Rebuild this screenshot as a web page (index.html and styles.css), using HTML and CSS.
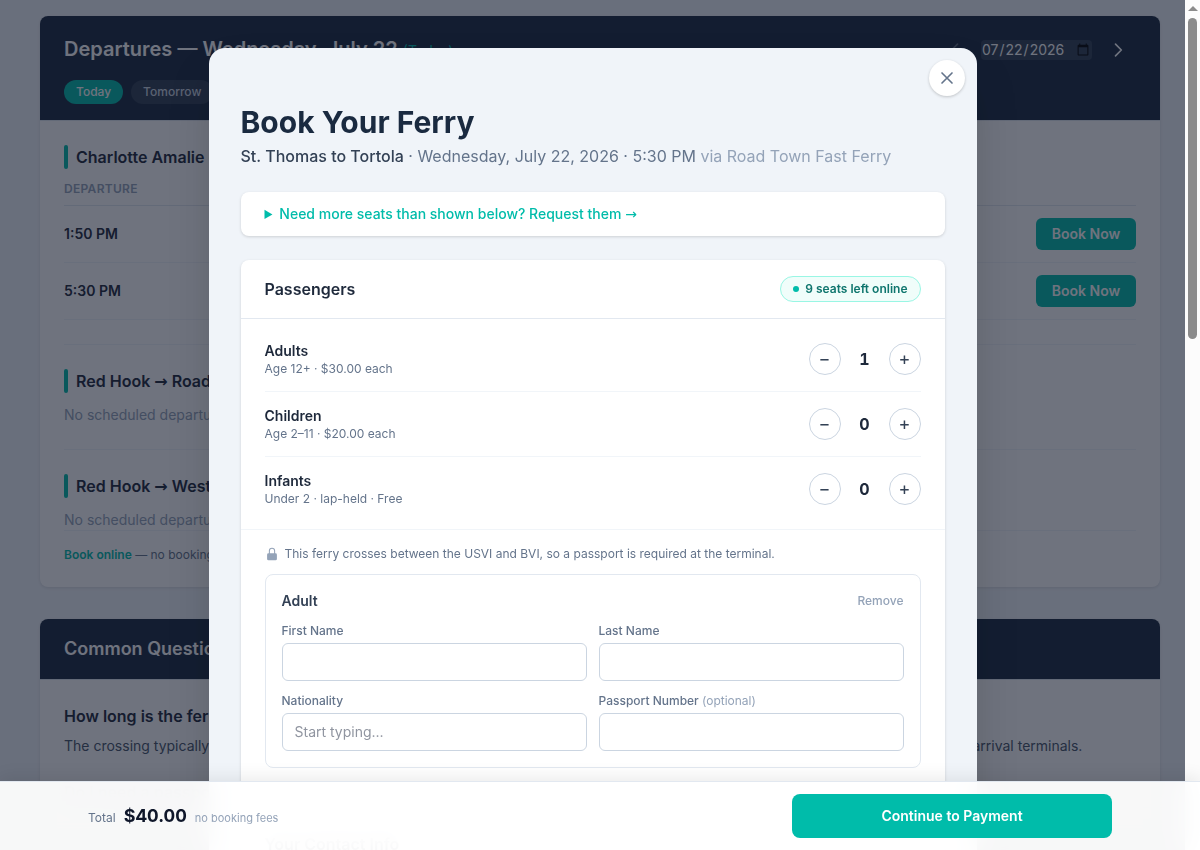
FILE: index.html
```html
<!DOCTYPE html>
<html lang="en">
<head>
  <meta charset="UTF-8">
  <meta name="viewport" content="width=device-width, initial-scale=1.0">
  <title>Book Your Ferry</title>
  <link rel="stylesheet" href="styles.css">
</head>
<body>
  <main class="page">
    <section class="card">
      <div class="card-header">
        <div class="header-row">
          <h2 class="header-title">Departures — Wednesday, July 22 <span class="header-today">(Today)</span></h2>
          <div class="date-nav">
            <button class="nav-btn" aria-label="Previous day" disabled>
              <svg viewBox="0 0 24 24"><path d="M15 19l-7-7 7-7"/></svg>
            </button>
            <input class="date-input" type="date" value="2026-07-22" aria-label="Departure date">
            <button class="nav-btn" aria-label="Next day">
              <svg viewBox="0 0 24 24"><path d="M9 5l7 7-7 7"/></svg>
            </button>
          </div>
        </div>
        <div class="day-pills">
          <button class="pill active">Today</button>
          <button class="pill">Tomorrow</button>
        </div>
      </div>
      <div class="card-body">
        <div class="route">
          <h3 class="route-title">Charlotte Amalie <span class="arrow">→</span> Road Town</h3>
          <table class="departures">
            <thead>
              <tr><th>Departure</th><th></th></tr>
            </thead>
            <tbody>
              <tr><td>1:50 PM</td><td class="action"><button class="book-btn">Book Now</button></td></tr>
              <tr><td>5:30 PM</td><td class="action"><button class="book-btn">Book Now</button></td></tr>
            </tbody>
          </table>
        </div>
        <div class="route">
          <h3 class="route-title">Red Hook <span class="arrow">→</span> Road Town</h3>
          <p class="no-departures">No scheduled departures</p>
        </div>
        <div class="route">
          <h3 class="route-title">Red Hook <span class="arrow">→</span> West End</h3>
          <p class="no-departures">No scheduled departures</p>
        </div>
        <p class="book-note"><strong>Book online</strong> — no booking fees</p>
      </div>
    </section>

    <section class="card">
      <div class="card-header">
        <h2 class="section-title">Common Questions</h2>
      </div>
      <div class="card-body">
        <h3 class="question">How long is the ferry ride?</h3>
        <p class="answer">The crossing typically takes about 45 to 60 minutes, depending on sea conditions, the vessel in service that day, and your departure and arrival terminals.</p>
        <h3 class="question">Do I need a passport?</h3>
      </div>
    </section>
  </main>

  <div class="overlay">
    <div class="overlay-content">
      <div class="modal" role="dialog" aria-labelledby="modal-title">
        <button class="close-btn" aria-label="Close">
          <svg viewBox="0 0 24 24"><path d="M6 18L18 6M6 6l12 12"/></svg>
        </button>
        <h1 class="modal-title" id="modal-title">Book Your Ferry</h1>
        <p class="modal-subtitle"><span class="trip">St. Thomas to Tortola</span> · Wednesday, July 22, 2026 · 5:30 PM <span class="operator">via Road Town Fast Ferry</span></p>

        <details class="panel more-seats">
          <summary>Need more seats than shown below? Request them <span class="arrow">→</span></summary>
        </details>

        <section class="panel">
          <div class="panel-header">
            <h2>Passengers</h2>
            <span class="seats-left">9 seats left online</span>
          </div>
          <div class="counters">
            <div class="counter-row">
              <div>
                <div class="counter-name">Adults</div>
                <div class="counter-info">Age 12+ · $30.00 each</div>
              </div>
              <div class="counter">
                <button aria-label="Remove adult">−</button>
                <span class="count">1</span>
                <button aria-label="Add adult">+</button>
              </div>
            </div>
            <div class="counter-row">
              <div>
                <div class="counter-name">Children</div>
                <div class="counter-info">Age 2–11 · $20.00 each</div>
              </div>
              <div class="counter">
                <button aria-label="Remove child">−</button>
                <span class="count">0</span>
                <button aria-label="Add child">+</button>
              </div>
            </div>
            <div class="counter-row">
              <div>
                <div class="counter-name">Infants</div>
                <div class="counter-info">Under 2 · lap-held · Free</div>
              </div>
              <div class="counter">
                <button aria-label="Remove infant">−</button>
                <span class="count">0</span>
                <button aria-label="Add infant">+</button>
              </div>
            </div>
          </div>
          <div class="travelers">
            <p class="passport-note">
              <svg viewBox="0 0 20 20"><path fill-rule="evenodd" d="M10 1a4.500 4.500 0 00-4.500 4.500V9H5a2 2 0 00-2 2v6a2 2 0 002 2h10a2 2 0 002-2v-6a2 2 0 00-2-2h-.5V5.500A4.500 4.500 0 0010 1zm3 8V5.500a3 3 0 10-6 0V9h6z"/></svg>
              This ferry crosses between the USVI and BVI, so a passport is required at the terminal.
            </p>
            <div class="traveler">
              <div class="traveler-header">
                <h3>Adult</h3>
                <button class="remove-btn">Remove</button>
              </div>
              <div class="fields">
                <div class="field">
                  <label for="first-name">First Name</label>
                  <input type="text" id="first-name">
                </div>
                <div class="field">
                  <label for="last-name">Last Name</label>
                  <input type="text" id="last-name">
                </div>
                <div class="field">
                  <label for="nationality">Nationality</label>
                  <input type="text" id="nationality" placeholder="Start typing...">
                </div>
                <div class="field">
                  <label for="passport">Passport Number <span class="optional">(optional)</span></label>
                  <input type="text" id="passport">
                </div>
              </div>
            </div>
          </div>
        </section>

        <section class="panel">
          <div class="panel-header">
            <h2>Your Contact Info</h2>
          </div>
        </section>
      </div>
    </div>
    <div class="scrollbar" aria-hidden="true">
      <span class="scroll-arrow"></span>
      <span class="scroll-thumb"></span>
    </div>
  </div>

  <div class="pay-bar">
    <div class="pay-inner">
      <div class="total">
        <span class="total-label">Total</span>
        <span class="total-amount">$40.00</span>
        <span class="total-note">no booking fees</span>
      </div>
      <button class="pay-btn">Continue to Payment</button>
    </div>
  </div>
</body>
</html>
```
FILE: styles.css
```css
:root {
  --teal: #00bcaa;
  --navy: #1a2a40;
  --page-bg: #f0f4f9;
  --ink: #1e293b;
  --slate: #334155;
  --muted: #64748b;
  --faint: #94a3b8;
  --line: #e2e8f0;
  --line-soft: #f1f5f9;
  --line-strong: #cbd5e1;
}

* {
  box-sizing: border-box;
  margin: 0;
  padding: 0;
}

body {
  font-family: Inter, 'Liberation Sans', sans-serif;
  font-size: 14px;
  line-height: 20px;
  color: var(--ink);
  background: var(--page-bg);
  height: 100vh;
  overflow: hidden;
}

button,
input {
  font: inherit;
}

button {
  border: none;
  background: none;
  cursor: pointer;
}

.arrow {
  font-family: 'Open Sans', 'DejaVu Sans', sans-serif;
}

.page {
  display: flex;
  flex-direction: column;
  gap: 32px;
  padding: 16px 40px;
}

/* Schedule and FAQ cards */

.card {
  background: #fff;
  border-radius: 8px;
  box-shadow: 0 1px 3px rgba(0, 0, 0, 0.1);
  overflow: hidden;
}

.card-header {
  background: var(--navy);
  color: #fff;
  padding: 16px 24px;
  border-bottom: 1px solid var(--line);
  background-clip: padding-box;
}

.header-row {
  display: flex;
  justify-content: space-between;
  align-items: center;
  margin-bottom: 12px;
}

.header-title {
  font-size: 20px;
  line-height: 32px;
  font-weight: 600;
}

.header-today {
  font-size: 14px;
  font-weight: 400;
  color: var(--teal);
}

.date-nav {
  display: flex;
  align-items: center;
  gap: 8px;
}

.nav-btn {
  display: flex;
  padding: 8px;
  color: #fff;
}

.nav-btn:disabled {
  opacity: 0.3;
}

.nav-btn svg {
  width: 20px;
  height: 20px;
  fill: none;
  stroke: currentColor;
  stroke-width: 2;
  stroke-linecap: round;
  stroke-linejoin: round;
}

.date-input {
  height: 20px;
  border: none;
  border-radius: 4px;
  background: rgba(255, 255, 255, 0.1);
  color: #fff;
}

.date-input::-webkit-calendar-picker-indicator {
  margin-left: -15px;
}

.day-pills {
  display: flex;
  gap: 8px;
}

.pill {
  padding: 4px 12px;
  border-radius: 12px;
  font-size: 12px;
  line-height: 16px;
  font-weight: 500;
  color: var(--line-strong);
  background: rgba(255, 255, 255, 0.1);
}

.pill.active {
  color: #fff;
  background: var(--teal);
}

.section-title {
  font-size: 18px;
  line-height: 28px;
  font-weight: 600;
}

.card-body {
  padding: 24px;
}

.route {
  padding-bottom: 24px;
  margin-bottom: 24px;
  border-bottom: 1px solid var(--line-soft);
}

.route:nth-last-child(2) {
  padding-bottom: 0;
  margin-bottom: 16px;
}

.route-title {
  position: relative;
  padding-left: 12px;
  margin-bottom: 12px;
  font-size: 16px;
  line-height: 24px;
  font-weight: 600;
}

.route-title::before {
  content: "";
  position: absolute;
  left: 0;
  width: 4px;
  height: 100%;
  border-radius: 2px;
  background: var(--teal);
}

.departures {
  width: 100%;
  border-collapse: separate;
  border-spacing: 0;
}

.departures th {
  padding-bottom: 8px;
  border-bottom: 1px solid var(--line);
  font-size: 12px;
  line-height: 16px;
  font-weight: 600;
  letter-spacing: 0.025em;
  text-align: left;
  text-transform: uppercase;
  color: var(--faint);
}

.departures td {
  padding: 12px 0;
  border-bottom: 1px solid var(--line-soft);
  font-weight: 600;
}

.departures .action {
  text-align: right;
}

.book-btn {
  display: inline-block;
  vertical-align: top;
  width: 100px;
  padding: 6px 12px;
  border-radius: 6px;
  font-weight: 600;
  color: #fff;
  background: var(--teal);
}

.no-departures {
  color: var(--faint);
}

.book-note {
  font-size: 12px;
  line-height: 16px;
  color: var(--muted);
}

.book-note strong {
  font-weight: 600;
  color: var(--teal);
}

.question {
  margin-bottom: 8px;
  font-size: 16px;
  line-height: 24px;
  font-weight: 600;
}

.answer {
  margin-bottom: 24px;
  color: #475569;
}

/* Booking dialog */

.overlay {
  position: fixed;
  inset: 0;
  z-index: 10;
  display: flex;
  background: rgba(15, 21, 40, 0.6);
}

.overlay-content {
  flex: 1;
  overflow-y: auto;
  padding: 48px 16px;
}

.scrollbar {
  display: flex;
  flex-direction: column;
  align-items: center;
  gap: 7px;
  width: 15px;
  padding-top: 6px;
  background: #fcfcfc;
}

.scroll-arrow {
  border: 5px solid transparent;
  border-top: none;
  border-bottom-color: #8b8b8b;
}

.scroll-thumb {
  width: 9px;
  height: 38%;
  border-radius: 5px;
  background: #8b8b8b;
}

.modal {
  position: relative;
  max-width: 768px;
  margin: 0 auto;
  padding: 56px 32px;
  border-radius: 16px;
  background: var(--page-bg);
  box-shadow: 0 25px 50px -12px rgba(0, 0, 0, 0.25);
}

.close-btn {
  position: absolute;
  top: 12px;
  right: 12px;
  display: flex;
  padding: 8px;
  border-radius: 50%;
  color: var(--muted);
  background: #fff;
  box-shadow: 0 1px 3px rgba(0, 0, 0, 0.2);
}

.close-btn svg {
  width: 20px;
  height: 20px;
  fill: none;
  stroke: currentColor;
  stroke-width: 2;
  stroke-linecap: round;
}

.modal-title {
  margin-bottom: 4px;
  font-size: 30px;
  line-height: 36px;
  font-weight: 700;
  color: var(--navy);
}

.modal-subtitle {
  margin-bottom: 24px;
  font-size: 16px;
  line-height: 24px;
  color: var(--muted);
}

.trip {
  font-weight: 500;
  color: var(--slate);
}

.operator {
  color: var(--faint);
}

.panel {
  margin-bottom: 24px;
  border-radius: 8px;
  background: #fff;
  box-shadow: 0 1px 3px rgba(0, 0, 0, 0.15);
}

.more-seats summary {
  padding: 12px 24px;
  font-weight: 500;
  color: var(--teal);
  cursor: pointer;
}

.panel-header {
  display: flex;
  justify-content: space-between;
  align-items: center;
  padding: 16px 24px;
  border-bottom: 1px solid var(--line);
}

.panel-header h2 {
  font-size: 16px;
  line-height: 24px;
  font-weight: 600;
}

.seats-left {
  display: flex;
  align-items: center;
  gap: 6px;
  padding: 4px 12px;
  border: 1px solid #99f6e4;
  border-radius: 13px;
  font-size: 12px;
  line-height: 16px;
  font-weight: 600;
  color: #0f766e;
  background: #f0fdfa;
}

.seats-left::before {
  content: "";
  width: 6px;
  height: 6px;
  border-radius: 50%;
  background: var(--teal);
}

.counters {
  padding: 8px 24px;
}

.counter-row {
  display: flex;
  justify-content: space-between;
  align-items: center;
  padding: 14px 0;
}

.counter-row + .counter-row {
  border-top: 1px solid var(--line-soft);
}

.counter-name {
  font-weight: 600;
}

.counter-info {
  font-size: 12px;
  line-height: 16px;
  color: var(--muted);
}

.counter {
  display: flex;
  align-items: center;
  gap: 8px;
}

.counter button {
  width: 32px;
  height: 32px;
  border: 1px solid var(--line-strong);
  border-radius: 50%;
  font-size: 18px;
  color: var(--slate);
}

.count {
  width: 32px;
  font-size: 16px;
  font-weight: 700;
  font-variant-numeric: tabular-nums;
  text-align: center;
}

.travelers {
  padding: 16px 24px 24px;
  border-top: 1px solid var(--line-soft);
}

.passport-note {
  display: flex;
  align-items: center;
  gap: 6px;
  margin-bottom: 12px;
  font-size: 12px;
  line-height: 16px;
  color: var(--muted);
}

.passport-note svg {
  width: 14px;
  height: 14px;
  fill: var(--faint);
}

.traveler {
  padding: 16px;
  border: 1px solid var(--line);
  border-radius: 8px;
}

.traveler-header {
  display: flex;
  justify-content: space-between;
  align-items: center;
  margin-bottom: 12px;
}

.traveler-header h3 {
  font-size: 14px;
  font-weight: 600;
  color: var(--slate);
}

.remove-btn {
  font-size: 12px;
  line-height: 16px;
  font-weight: 500;
  color: var(--faint);
}

.fields {
  display: grid;
  grid-template-columns: 1fr 1fr;
  gap: 12px;
}

.field {
  display: flex;
  flex-direction: column;
  gap: 4px;
}

.field label {
  font-size: 12px;
  line-height: 16px;
  font-weight: 500;
  color: var(--muted);
}

.optional {
  font-weight: 400;
  color: var(--faint);
}

.field input {
  width: 100%;
  padding: 8px 12px;
  border: 1px solid var(--line-strong);
  border-radius: 6px;
  background: #fff;
}

.field input::placeholder {
  color: #9095a0;
}

/* Payment bar */

.pay-bar {
  position: fixed;
  left: 0;
  right: 0;
  bottom: 0;
  z-index: 20;
  padding: 12px 16px;
  border-top: 1px solid var(--line);
  background: rgba(255, 255, 255, 0.95);
  backdrop-filter: blur(12px);
  box-shadow: 0 -4px 16px rgba(0, 0, 0, 0.08);
}

.pay-inner {
  display: flex;
  justify-content: space-between;
  align-items: center;
  max-width: 1024px;
  margin: 0 auto;
}

.total {
  display: flex;
  align-items: baseline;
  gap: 8px;
}

.total-label {
  font-size: 12px;
  color: var(--muted);
}

.total-amount {
  font-size: 18px;
  line-height: 28px;
  font-weight: 700;
  font-variant-numeric: tabular-nums;
  color: #0f172a;
}

.total-note {
  font-size: 11px;
  color: var(--faint);
}

.pay-btn {
  width: 320px;
  padding: 12px 24px;
  border-radius: 8px;
  font-weight: 600;
  color: #fff;
  background: var(--teal);
}
```
